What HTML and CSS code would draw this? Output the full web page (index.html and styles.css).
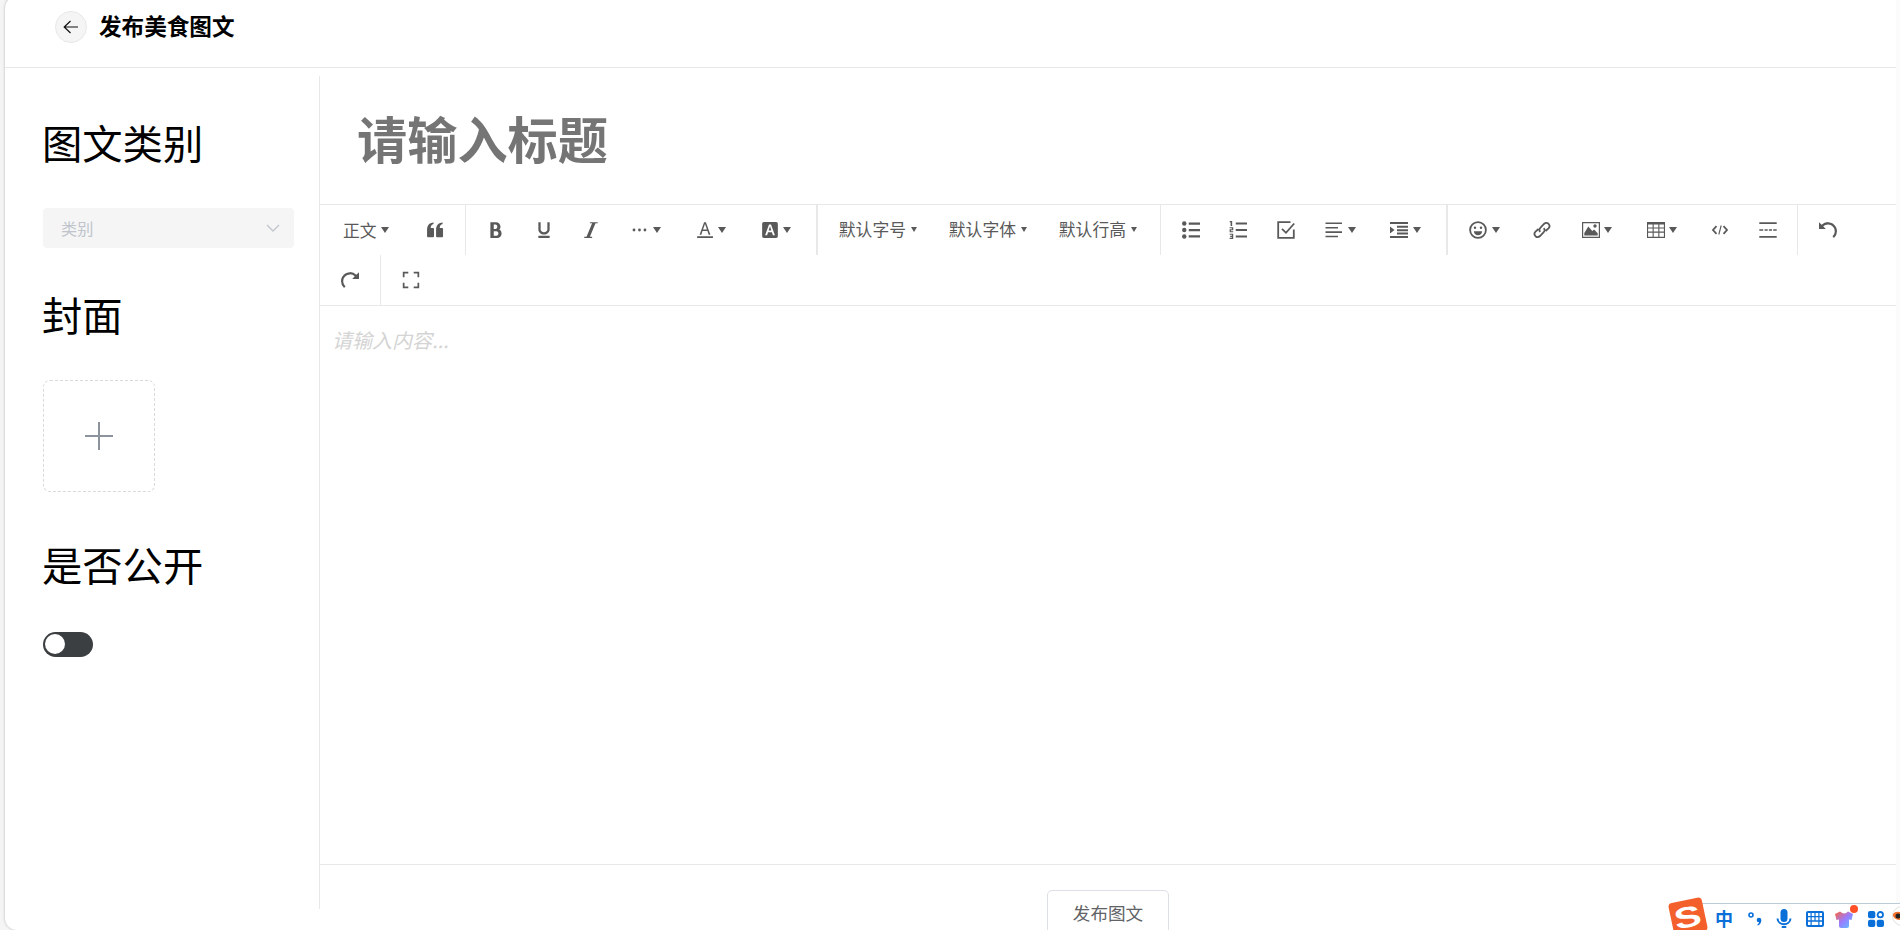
FILE: index.html
```html
<!DOCTYPE html>
<html lang="zh-CN">
<head>
    <meta charset="UTF-8">
    <meta name="viewport" content="width=device-width, initial-scale=1.0">
    <title>发布美食图文</title>
    <link rel="stylesheet" href="styles.css">
</head>
<body>
    <div class="page">
      <header class="header">
        <button class="back">
          <svg viewBox="0 0 16 16"><path d="M1 8h14M7.500 2L1.200 8l6.300 6"/></svg>
        </button>
        <div class="header-title">发布美食图文</div>
      </header>

      <div class="main">
        <aside class="sidebar">
          <div class="label">图文类别</div>
          <div class="select">
            <span>类别</span>
            <svg viewBox="0 0 14 8"><path d="M1 1l6 6 6-6"/></svg>
          </div>
          <div class="label label-cover">封面</div>
          <div class="upload">
            <svg viewBox="0 0 30 30"><path d="M15 1v28M1 15h28"/></svg>
          </div>
          <div class="label label-public">是否公开</div>
          <div class="switch"><div class="knob"></div></div>
        </aside>

        <section class="editor">
          <input class="title-input" type="text" placeholder="请输入标题">

          <div class="toolbar">
            <button class="tool tool-head">正文<i class="arrow"></i></button>
            <button class="tool"><svg viewBox="0 0 1024 1024"><path d="M430 90v75C325 180 275 260 265 400h140q50 0 50 50v420q0 50-50 50H110q-50 0-50-50V520C60 260 170 110 430 90zM944 90v75C839 180 789 260 779 400h140q50 0 50 50v420q0 50-50 50H624q-50 0-50-50V520C574 260 684 110 944 90z"/></svg></button>
            <div class="divider"></div>
            <button class="tool"><svg viewBox="0 0 1024 1024"><path d="M707.872 484.640A254.880 254.880 0 0 0 768 320c0-141.152-114.848-256-256-256H192v896h384c141.152 0 256-114.848 256-256a256.096 256.096 0 0 0-124.128-219.360zM384 192h101.504c55.968 0 101.504 57.408 101.504 128s-45.536 128-101.504 128H384V192z m159.008 640H384v-256h159.008c58.464 0 106.016 57.408 106.016 128s-47.552 128-106.016 128z"/></svg></button>
            <button class="tool"><svg viewBox="0 0 1024 1024"><path d="M704 64h128v416c0 159-143 288-320 288s-320-129-320-288V64h128v416c0 40 18 79 51 109 37 33 87 51 141 51s104-18 141-51c33-30 51-69 51-109zM192 832h640v128H192z"/></svg></button>
            <button class="tool"><svg viewBox="0 0 1024 1024"><path d="M896 64v64h-128L448 896h128v64H128v-64h128L576 128h-128V64z"/></svg></button>
            <button class="tool tool-more"><svg viewBox="0 0 1024 1024"><circle cx="170" cy="512" r="80"/><circle cx="482" cy="512" r="80"/><circle cx="794" cy="512" r="80"/></svg><i class="arrow"></i></button>
            <button class="tool tool-more"><svg viewBox="0 0 1024 1024"><path d="M64 870h900v90H64zM205 780L460 64h104l255 716h-98l-71-205H371l-69 205zM400 490h222L512 165z"/></svg><i class="arrow"></i></button>
            <button class="tool tool-more"><svg viewBox="0 0 1024 1024"><path fill-rule="evenodd" d="M165 55h694q100 0 100 100v714q0 100-100 100H165q-100 0-100-100V155q0-100 100-100zM235 810h112l55-170h220l56 170h112L570 200H455zM435 540l77-235 77 235z"/></svg><i class="arrow"></i></button>
            <div class="divider wide"></div>
            <button class="tool tool-text">默认字号<i class="arrow small"></i></button>
            <button class="tool tool-text">默认字体<i class="arrow small"></i></button>
            <button class="tool tool-text">默认行高<i class="arrow small"></i></button>
            <div class="divider"></div>
            <button class="tool"><svg viewBox="0 0 1024 1024"><path d="M384 80h640v128H384zM384 448h640v128H384zM384 816h640v128H384z"/><circle cx="128" cy="145" r="125"/><circle cx="128" cy="512" r="125"/><circle cx="128" cy="879" r="125"/></svg></button>
            <button class="tool"><svg viewBox="0 0 1024 1024"><path d="M384 85h640v115H384zM384 455h640v115H384zM384 825h640v115H384zM90 0h90v280H90V75H35V15zM35 350h205v180H110v50h130v65H35V470h130v-55H35zM35 720h205v304H35v-65h130v-55H70v-60h95v-60H35z"/></svg></button>
            <button class="tool"><svg class="line" viewBox="0 0 18 18"><path d="M13.500 1.200H1.200v15.600h15.600V8.500M5 7.800l4 4L17.200 2.500"/></svg></button>
            <button class="tool tool-more"><svg viewBox="0 0 18 18"><path d="M.5 1.500h16.500v1.600H.5zM.5 5.900h12.500v1.600H.5zM.5 10.300h16.500v1.600H.5zM.5 14.700h12.500v1.600H.5z"/></svg><i class="arrow"></i></button>
            <button class="tool tool-more"><svg viewBox="0 0 18 18"><path d="M0 1h18v2H0zM7 4.800h11v2H7zM7 8.200h11v2H7zM7 11.600h11v2H7zM0 15h18v2H0zM0 5.500L4.500 9 0 12.500z"/></svg><i class="arrow"></i></button>
            <div class="divider wide"></div>
            <button class="tool tool-more"><svg viewBox="0 0 18 18"><circle class="line" cx="9" cy="9" r="7.900"/><circle cx="6" cy="6.800" r="1.200"/><circle cx="12" cy="6.800" r="1.200"/><path d="M4.800 10.200h8.400c-.3 2.500-2 4-4.200 4s-3.900-1.500-4.200-4z"/></svg><i class="arrow"></i></button>
            <button class="tool"><svg class="line" viewBox="0 0 18 18"><path d="M7.300 10.900c-1.300-1.300-1.100-2.900 0-4l3.700-3.900c1.300-1.300 3.200-1.300 4.500-.2 1.300 1.300 1.200 3.200 0 4.500L12.500 10M10.700 7.100c1.300 1.300 1.100 2.900 0 4L7 15c-1.300 1.300-3.200 1.300-4.500.2-1.300-1.300-1.200-3.200 0-4.500L5.500 8"/></svg></button>
            <button class="tool tool-more"><svg viewBox="0 0 18 18"><path fill-rule="evenodd" d="M0 1h18v16H0zM1.200 2.200v13.600h15.600V2.200zM2.300 14.500V12l4-6.500 4 4.600 1.800-1.600 3.600 3.800v2.200z"/><circle cx="13" cy="5" r="1.700"/></svg><i class="arrow"></i></button>
            <button class="tool tool-more"><svg viewBox="0 0 18 18"><path fill-rule="evenodd" d="M0 1h18v16H0zM1.100 3.500v3h4.500v-3zM6.700 3.500v3h4.600v-3zM12.400 3.500v3h4.500v-3zM1.100 7.600v3h4.500v-3zM6.700 7.600v3h4.600v-3zM12.400 7.600v3h4.500v-3zM1.100 11.700v4.100h4.500v-4.100zM6.700 11.700v4.100h4.600v-4.100zM12.400 11.700v4.100h4.500v-4.100z"/></svg><i class="arrow"></i></button>
            <button class="tool"><svg class="line" viewBox="0 0 18 18"><path d="M5.500 5.200L2 9l3.500 3.800M12.500 5.200L16 9l-3.500 3.800"/><path class="thin" d="M10.200 4.500L7.800 13.500"/></svg></button>
            <button class="tool"><svg viewBox="0 0 18 18"><path d="M.3 1.300h17.400V3H.3zM.3 8.200h3.900v1.600H.3zM5.600 8.200h3.100v1.600H5.600zM9.900 8.200H13v1.600H9.900zM14.200 8.200h3.500v1.600h-3.500zM.3 15h17.400v1.700H.3z"/></svg></button>
            <div class="divider"></div>
            <button class="tool"><svg viewBox="0 0 1024 1024"><path d="M512 64A510.272 510.272 0 0 0 149.984 213.984L0.032 64v384h384L240.512 304.480A382.784 382.784 0 0 1 512 192c212.064 0 384 171.936 384 384 0 114.688-50.304 217.632-130.016 288l84.672 96a510.720 510.720 0 0 0 173.344-384c0-282.784-229.216-512-512-512z"/></svg></button>
            <button class="tool"><svg viewBox="0 0 1024 1024"><path transform="matrix(-1 0 0 1 1024 0)" d="M512 64A510.272 510.272 0 0 0 149.984 213.984L0.032 64v384h384L240.512 304.480A382.784 382.784 0 0 1 512 192c212.064 0 384 171.936 384 384 0 114.688-50.304 217.632-130.016 288l84.672 96a510.720 510.720 0 0 0 173.344-384c0-282.784-229.216-512-512-512z"/></svg></button>
            <div class="divider"></div>
            <button class="tool"><svg viewBox="0 0 18 18"><path d="M.8.8h5.500v1.700H2.500v3.800H.8zM11.700.8h5.500v5.500h-1.700V2.500h-3.800zM.8 11.700h1.700v3.800h3.800v1.700H.8zM15.500 11.700h1.700v5.500h-5.500v-1.700h3.800z"/></svg></button>
          </div>

          <div class="content">请输入内容...</div>
          <div class="footer">
            <button class="publish">发布图文</button>
          </div>
        </section>
      </div>
    </div>

    <!-- input method bar -->
    <div class="ime">
      <div class="ime-logo"><span>S</span></div>
      <span class="ime-lang">中</span>
      <svg class="ime-punct" viewBox="0 0 14 14"><circle cx="3" cy="3" r="2" fill="none" stroke="#0a6fd8" stroke-width="1.600"/><circle cx="11" cy="8" r="2.300"/><path d="M13.300 8c0 3-1.300 4.700-3.500 5.500l-.5-1c1.300-.7 1.800-1.500 1.700-3z"/></svg>
      <svg class="ime-mic" viewBox="0 0 16 20"><rect x="4.500" y="0" width="7" height="13" rx="3.500"/><path d="M1.500 9.500c.5 7.500 12.500 7.500 13 0" fill="none" stroke="#0a6fd8" stroke-width="2"/><rect x="5.500" y="17" width="5" height="2" rx="1"/></svg>
      <svg class="ime-keys" viewBox="0 0 18 16"><path fill-rule="evenodd" d="M2 0h14q2 0 2 2v12q0 2-2 2H2q-2 0-2-2V2q0-2 2-2zM2 2v3h2.500V2zM5.700 2v3h2.700V2zM9.600 2v3h2.700V2zM13.500 2v3H16V2zM2 6.300v3h2.500v-3zM5.700 6.300v3h2.700v-3zM9.600 6.300v3h2.700v-3zM13.500 6.300v3H16v-3zM2 10.700V14h2.500v-3.300zM5.700 10.700V14h6.600v-3.300zM13.500 10.700V14H16v-3.300z"/></svg>
      <svg class="ime-skin" viewBox="0 0 24 24">
        <defs><linearGradient id="skin" x1="0" y1="0" x2="1" y2="1"><stop offset="0" stop-color="#ff6537"/><stop offset=".5" stop-color="#9b7cff"/><stop offset="1" stop-color="#55c8ff"/></linearGradient></defs>
        <path d="M5 6.500q4.500 4 8 0l5 2.500-1.500 6-2.500-.5V21q0 2-2 2H6q-2 0-2-2v-6.500L1.500 15 0 9z" fill="url(#skin)"/><circle cx="19" cy="4" r="4" fill="#ff5028"/>
      </svg>
      <svg class="ime-apps" viewBox="0 0 16 16"><rect width="7.300" height="7.300" rx="2"/><circle cx="12.300" cy="3.700" r="2.700" fill="none" stroke="#0a6fd8" stroke-width="1.800"/><rect y="8.700" width="7.300" height="7.300" rx="2"/><rect x="8.700" y="8.700" width="7.300" height="7.300" rx="2"/></svg>
      <svg class="ime-pet" viewBox="0 0 8 20"><circle cx="10" cy="10" r="9.500" fill="#fff" stroke="#e4dfdb"/><path d="M1 8q2-3 7-2v8q-5 0-7-4z" fill="#f0702c"/><circle cx="6" cy="10" r="2.500" fill="#222"/></svg>
    </div>
</body>
</html>
```
FILE: styles.css
```css
* {
    box-sizing: border-box;
    margin: 0;
    padding: 0;
}

body {
    font-family: 'Noto Sans CJK SC', sans-serif;
    height: 930px;
    overflow: hidden;
    background: #f5f5f5;
    color: #000;
}

.page {
    height: 934px;
    margin: -4px 0 0 5px;
    padding-top: 4px;
    border-right: 4px solid #fbfbfb;
    border-radius: 12px 0 0 12px;
    background: #fff;
    box-shadow: 0 0 3px rgba(0, 0, 0, 0.25);
}

button {
    font-family: inherit;
    border: none;
    background: none;
}

svg {
    display: block;
    flex-shrink: 0;
}

.header {
    display: flex;
    align-items: center;
    height: 68px;
    padding: 0 0 13px 50px;
    border-bottom: 1px solid #e8e8e8;
}

.back {
    display: flex;
    align-items: center;
    justify-content: center;
    width: 32px;
    height: 32px;
    border: 1px solid #e8e8e8;
    border-radius: 50%;
    background: #f5f5f5;
}

.back svg {
    width: 16px;
    height: 16px;
    fill: none;
    stroke: #111;
    stroke-width: 1.2;
}

.header-title {
    margin-left: 12px;
    padding-bottom: 2px;
    font-size: 22.6px;
    font-weight: bold;
    line-height: 32px;
}

.main {
    display: flex;
    height: 841px;
    padding-top: 8px;
}

.sidebar {
    width: 315px;
    padding: 38px 24px 0 38px;
    border-right: 1px solid #e8e8e8;
}

.label {
    height: 56px;
    margin-left: -1px;
    font-size: 40.3px;
    line-height: 56px;
}

.label-cover {
    margin-top: 38px;
}

.label-public {
    margin-top: 44px;
}

.select {
    display: flex;
    align-items: center;
    justify-content: space-between;
    width: 251px;
    height: 40px;
    margin-top: 38px;
    padding: 0 14px 0 18px;
    border-radius: 4px;
    background: #f5f5f5;
    color: #c0c4cc;
    font-size: 16.2px;
}

.select span {
    padding-bottom: 1px;
}

.select svg {
    width: 14px;
    height: 8px;
    fill: none;
    stroke: #c0c4cc;
    stroke-width: 1.3;
}

.upload {
    display: flex;
    align-items: center;
    justify-content: center;
    width: 112px;
    height: 112px;
    margin-top: 38px;
    border: 1px dashed #d9d9d9;
    border-radius: 7px;
}

.upload svg {
    width: 30px;
    height: 30px;
    margin-right: 1px;
    fill: none;
    stroke: #8c939d;
    stroke-width: 2;
}

.switch {
    width: 50px;
    height: 25px;
    margin-top: 40px;
    padding: 2px;
    border-radius: 13px;
    background: #3c3f41;
}

.knob {
    width: 20px;
    height: 20px;
    border-radius: 50%;
    background: #fff;
}

.editor {
    flex: 1;
    min-width: 0;
}

.title-input {
    display: block;
    width: 100%;
    height: 128px;
    padding: 0 0 6px 37px;
    border: none;
    outline: none;
    background: none;
    font-family: inherit;
    font-size: 50.2px;
    font-weight: bold;
}

.title-input::placeholder {
    color: #757575;
}

.toolbar {
    display: flex;
    flex-wrap: wrap;
    height: 102px;
    padding-left: 6px;
    border-top: 1px solid #e8e8e8;
    border-bottom: 1px solid #e8e8e8;
}

.tool {
    display: flex;
    align-items: center;
    justify-content: center;
    width: 47.7px;
    height: 50px;
    color: #595959;
    font-size: 16.8px;
    white-space: nowrap;
}

.tool svg {
    width: 18px;
    height: 18px;
    fill: #595959;
}

.tool .line {
    fill: none;
    stroke: #595959;
    stroke-width: 1.8;
}

.tool .thin {
    stroke-width: 1.1;
}

.tool-head {
    width: 85.4px;
    justify-content: flex-start;
    padding: 0 0 1px 17px;
}

.tool-more {
    width: 64.9px;
    justify-content: flex-start;
    padding-left: 15.6px;
}

.tool-text {
    width: 110px;
    justify-content: flex-start;
    padding: 0 0 2px 15px;
}

.arrow {
    margin-left: 4.6px;
    border: 4px solid transparent;
    border-top: 6px solid #595959;
    border-bottom: none;
}

.arrow.small {
    border-width: 5px 3px 0;
}

.divider {
    width: 1px;
    height: 50px;
    margin: 0 6px;
    background: #e8e8e8;
}

.divider.wide {
    width: 2px;
}

.content {
    height: 559px;
    padding: 19px 12px;
    border-bottom: 1px solid #e8e8e8;
    color: #d4d4d4;
    font-size: 20px;
    font-style: italic;
    line-height: 30px;
}

.footer {
    display: flex;
    justify-content: center;
    padding-top: 25px;
}

.publish {
    width: 122px;
    height: 48px;
    padding-bottom: 3px;
    border: 1px solid #dcdfe6;
    border-radius: 5px;
    color: #606266;
    font-size: 17.6px;
}

/* floats over the bottom right corner */
.ime {
    position: absolute;
    right: 0;
    bottom: 0;
    display: flex;
    align-items: center;
    width: 212px;
    height: 27px;
    padding-top: 3px;
    border-top: 1px solid #bccbd8;
    background: #fff;
}

.ime svg {
    fill: #0a6fd8;
}

.ime-logo {
    display: flex;
    align-items: center;
    justify-content: center;
    flex-shrink: 0;
    width: 34px;
    height: 34px;
    margin: -4px 0 0 -17px;
    border-radius: 4px;
    background: #f4602c;
    transform: rotate(-12deg);
}

.ime-logo span {
    color: #fff;
    font-family: 'Liberation Sans', sans-serif;
    font-size: 29px;
    font-weight: bold;
    line-height: 26px;
    transform: scaleX(1.4);
}

.ime-lang {
    margin: -1px 0 0 10px;
    color: #0a6fd8;
    font-size: 18px;
    font-weight: bold;
    line-height: 22px;
}

.ime-punct {
    width: 14px;
    height: 14px;
    margin-left: 15px;
}

.ime-mic {
    width: 16px;
    height: 20px;
    margin-left: 14px;
}

.ime-keys {
    width: 18px;
    height: 16px;
    margin-left: 14px;
}

.ime-skin {
    width: 24px;
    height: 24px;
    margin: -4px 0 0 11px;
}

.ime-apps {
    width: 16px;
    height: 16px;
    margin-left: 9px;
}

.ime-pet {
    width: 8px;
    height: 20px;
    margin: -6px 0 0 8px;
}
```
